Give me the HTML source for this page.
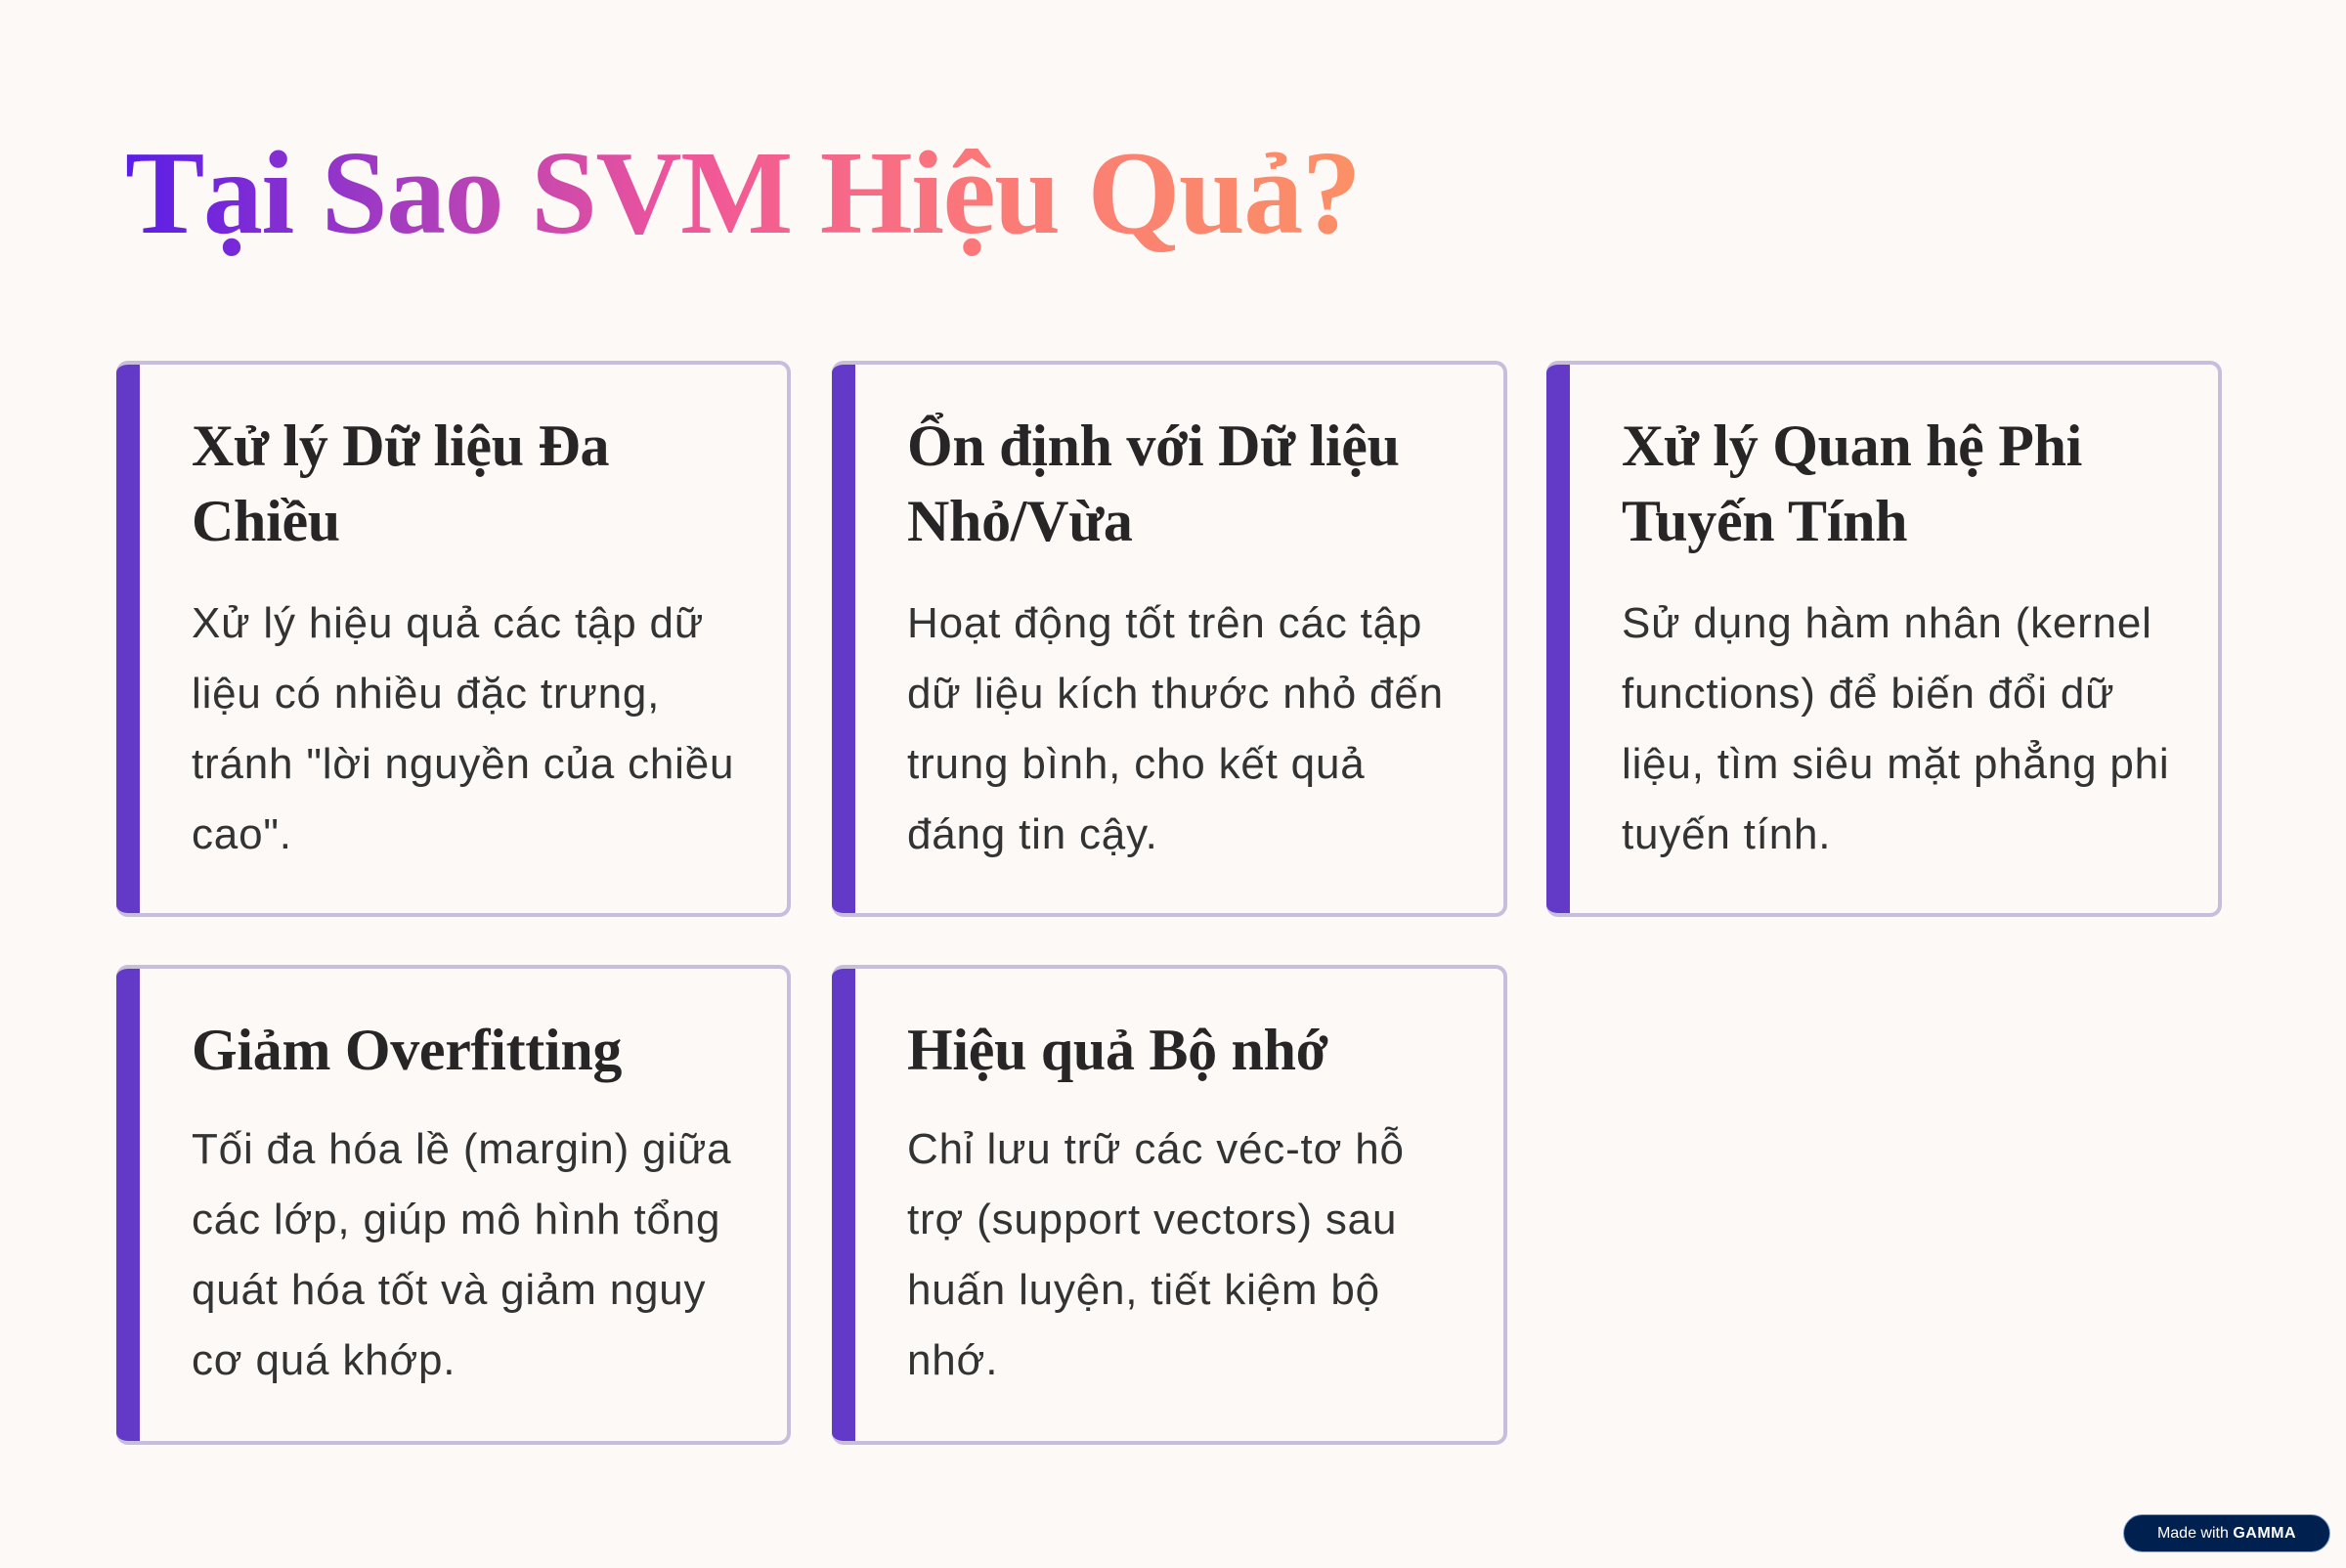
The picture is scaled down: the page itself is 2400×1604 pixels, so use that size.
<!DOCTYPE html>
<html><head><meta charset="utf-8"><style>
html,body{margin:0;padding:0}
body{width:2400px;height:1604px;background:#fdf9f6;position:relative;overflow:hidden;font-family:"Liberation Sans",sans-serif}
h1{position:absolute;left:128px;top:118px;margin:0;font-family:"Liberation Serif",serif;font-weight:bold;font-size:122px;line-height:160px;white-space:nowrap;letter-spacing:-1.5px;
background:linear-gradient(90deg,#5a1de8 0%,#a43cc0 22%,#f0559a 45%,#fb7a78 70%,#fb9066 100%);-webkit-background-clip:text;background-clip:text;color:transparent}
.card{position:absolute;box-sizing:border-box;border:4px solid #c7bedd;border-left:none;border-radius:12px;background:#fdf9f6;overflow:hidden}
.card:before{content:"";position:absolute;left:0;top:-4px;bottom:-4px;width:24px;background:#6339c8}
.card h2{position:absolute;left:77px;margin:0;font-family:"Liberation Serif",serif;font-weight:bold;font-size:60px;line-height:77px;color:#272525;letter-spacing:-0.3px;white-space:nowrap}
.card p{position:absolute;left:77px;margin:0;font-size:44px;line-height:72px;color:#333;white-space:nowrap;letter-spacing:0.8px}
.badge{position:absolute;left:2172px;top:1549px;width:212px;height:39px;border-radius:20px;background:#00214f;border:1px solid #7fa3d8;box-sizing:border-box;color:#fff;font-size:16px;line-height:37px;text-align:center}
</style></head><body>
<h1>Tại Sao SVM Hiệu Quả?</h1>

<div class="card" style="left:119px;top:369px;width:690px;height:569px">
<h2 style="top:45px">Xử lý Dữ liệu Đa<br>Chiều</h2>
<p style="top:229px">Xử lý hiệu quả các tập dữ<br>liệu có nhiều đặc trưng,<br>tránh "lời nguyền của chiều<br>cao".</p>
</div>
<div class="card" style="left:851px;top:369px;width:691px;height:569px">
<h2 style="top:45px">Ổn định với Dữ liệu<br>Nhỏ/Vừa</h2>
<p style="top:229px">Hoạt động tốt trên các tập<br>dữ liệu kích thước nhỏ đến<br>trung bình, cho kết quả<br>đáng tin cậy.</p>
</div>
<div class="card" style="left:1582px;top:369px;width:691px;height:569px">
<h2 style="top:45px">Xử lý Quan hệ Phi<br>Tuyến Tính</h2>
<p style="top:229px">Sử dụng hàm nhân (kernel<br>functions) để biến đổi dữ<br>liệu, tìm siêu mặt phẳng phi<br>tuyến tính.</p>
</div>
<div class="card" style="left:119px;top:987px;width:690px;height:491px">
<h2 style="top:45px">Giảm Overfitting</h2>
<p style="top:149px">Tối đa hóa lề (margin) giữa<br>các lớp, giúp mô hình tổng<br>quát hóa tốt và giảm nguy<br>cơ quá khớp.</p>
</div>
<div class="card" style="left:851px;top:987px;width:691px;height:491px">
<h2 style="top:45px">Hiệu quả Bộ nhớ</h2>
<p style="top:149px">Chỉ lưu trữ các véc-tơ hỗ<br>trợ (support vectors) sau<br>huấn luyện, tiết kiệm bộ<br>nhớ.</p>
</div>

<div class="badge">Made with <b style="letter-spacing:0.5px">GAMMA</b></div>
</body></html>
